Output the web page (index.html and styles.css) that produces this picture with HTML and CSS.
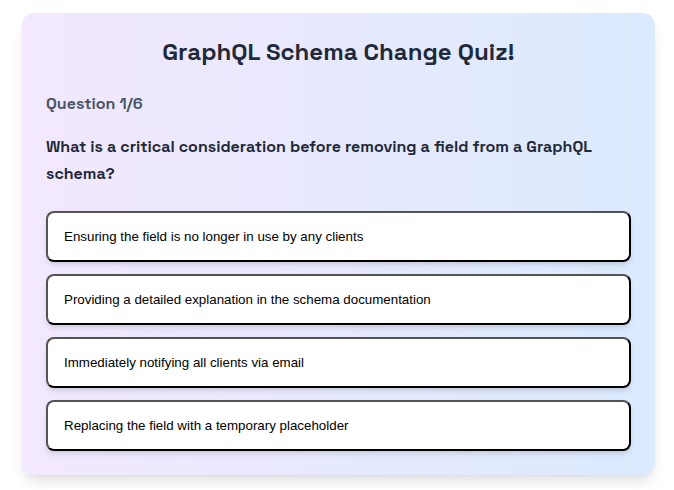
FILE: index.html
```html
<!DOCTYPE html>
<html lang="en">
<head>
<meta charset="utf-8">
<meta name="viewport" content="width=device-width, initial-scale=1">
<title>GraphQL Schema Change Quiz!</title>
<link rel="stylesheet" href="styles.css">
</head>
<body>
<main class="quiz">
  <h1 class="quiz-title">GraphQL Schema Change Quiz!</h1>
  <h2 class="quiz-progress">Question 1/6</h2>
  <p class="quiz-question">What is a critical consideration before removing a field from a GraphQL schema?</p>
  <div class="options">
    <button class="option" type="button">Ensuring the field is no longer in use by any clients</button>
    <button class="option" type="button">Providing a detailed explanation in the schema documentation</button>
    <button class="option" type="button">Immediately notifying all clients via email</button>
    <button class="option" type="button">Replacing the field with a temporary placeholder</button>
  </div>
</main>
</body>
</html>
```

FILE: styles.css
```css
* {
  box-sizing: border-box;
}

body {
  margin: 0;
  padding: 13px 19px 14px 22px;
  background: #fff;
  font-family: "Space Grotesk", Inter, "Liberation Sans", sans-serif;
}

.quiz {
  padding: 24px;
  border-radius: 12px;
  background: linear-gradient(to right, #f3e8ff, #dbeafe);
  box-shadow: 0 10px 15px -3px rgb(0 0 0 / 10%), 0 4px 6px -2px rgb(0 0 0 / 5%);
}

.quiz-title {
  margin: 0 0 24px;
  color: #1f2937;
  font-size: 24px;
  font-weight: 700;
  line-height: 30px;
  text-align: center;
}

.quiz-progress {
  margin: 0 0 16px;
  color: #4b5563;
  font-size: 16px;
  font-weight: 600;
  line-height: 26px;
}

.quiz-question {
  margin: 0 0 24px;
  color: #1f2937;
  font-size: 16px;
  font-weight: 600;
  line-height: 27px;
}

.options {
  display: grid;
  gap: 12px;
}

.option {
  padding: 16px;
  border: 2px outset #000;
  border-radius: 8px;
  background: #fff;
  box-shadow: 0 4px 6px -1px rgb(0 0 0 / 10%), 0 2px 4px -1px rgb(0 0 0 / 6%);
  color: #000;
  font-family: "Liberation Sans", Arial, sans-serif;
  text-align: left;
  cursor: pointer;
}
```
